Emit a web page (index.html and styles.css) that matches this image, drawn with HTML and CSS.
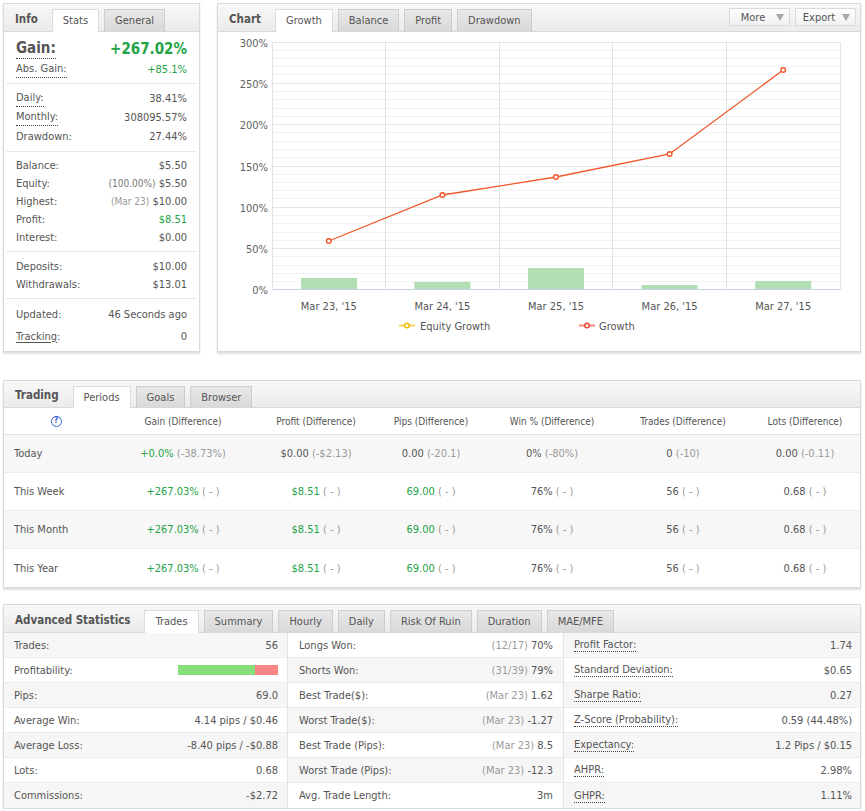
FILE: index.html
```html
<!DOCTYPE html>
<html lang="en">
<head>
<meta charset="utf-8">
<title>Account Overview</title>
<link rel="stylesheet" href="styles.css">
</head>
<body>
<div class="page">
  <div class="top">
    <section class="panel info">
      <div class="phead">
        <h2>Info</h2>
        <span class="tab on">Stats</span>
        <span class="tab">General</span>
      </div>
      <div class="sec s1">
        <div class="row big"><span class="dot">Gain:</span><span class="green">+267.02%</span></div>
        <div class="row"><span class="dot">Abs. Gain:</span><span class="green">+85.1%</span></div>
      </div>
      <div class="sec s2">
        <div class="row"><span class="dot">Daily:</span><span>38.41%</span></div>
        <div class="row"><span class="dot">Monthly:</span><span>308095.57%</span></div>
        <div class="row"><span>Drawdown:</span><span>27.44%</span></div>
      </div>
      <div class="sec s3">
        <div class="row"><span>Balance:</span><span>$5.50</span></div>
        <div class="row"><span>Equity:</span><span><small class="mid">(100.00%)</small> $5.50</span></div>
        <div class="row"><span>Highest:</span><span><small class="dim">(Mar 23)</small> $10.00</span></div>
        <div class="row"><span>Profit:</span><span class="green">$8.51</span></div>
        <div class="row"><span>Interest:</span><span>$0.00</span></div>
      </div>
      <div class="sec s4">
        <div class="row"><span>Deposits:</span><span>$10.00</span></div>
        <div class="row"><span>Withdrawals:</span><span>$13.01</span></div>
      </div>
      <div class="sec s5">
        <div class="row"><span>Updated:</span><span>46 Seconds ago</span></div>
        <div class="row track"><span><u>Tracking</u>:</span><span>0</span></div>
      </div>
    </section>

    <section class="panel chart">
      <div class="phead">
        <h2>Chart</h2>
        <span class="tab on">Growth</span>
        <span class="tab">Balance</span>
        <span class="tab">Profit</span>
        <span class="tab">Drawdown</span>
        <div class="tools">
          <span class="btn"><span>More</span><i class="caret"></i></span>
          <span class="btn"><span>Export</span><i class="caret"></i></span>
        </div>
      </div>
      <svg class="plot" width="642" height="319" viewBox="0 0 642 319">
        <g class="minor">
          <line x1="54" x2="622" y1="249.5" y2="249.5"/><line x1="54" x2="622" y1="241.5" y2="241.5"/>
          <line x1="54" x2="622" y1="233.5" y2="233.5"/><line x1="54" x2="622" y1="224.5" y2="224.5"/>
          <line x1="54" x2="622" y1="208.5" y2="208.5"/><line x1="54" x2="622" y1="200.5" y2="200.5"/>
          <line x1="54" x2="622" y1="191.5" y2="191.5"/><line x1="54" x2="622" y1="183.5" y2="183.5"/>
          <line x1="54" x2="622" y1="166.5" y2="166.5"/><line x1="54" x2="622" y1="158.5" y2="158.5"/>
          <line x1="54" x2="622" y1="150.5" y2="150.5"/><line x1="54" x2="622" y1="142.5" y2="142.5"/>
          <line x1="54" x2="622" y1="125.5" y2="125.5"/><line x1="54" x2="622" y1="117.5" y2="117.5"/>
          <line x1="54" x2="622" y1="109.5" y2="109.5"/><line x1="54" x2="622" y1="100.5" y2="100.5"/>
          <line x1="54" x2="622" y1="84.5" y2="84.5"/><line x1="54" x2="622" y1="76.5" y2="76.5"/>
          <line x1="54" x2="622" y1="67.5" y2="67.5"/><line x1="54" x2="622" y1="59.5" y2="59.5"/>
          <line x1="54" x2="622" y1="42.5" y2="42.5"/><line x1="54" x2="622" y1="34.5" y2="34.5"/>
          <line x1="54" x2="622" y1="26.5" y2="26.5"/><line x1="54" x2="622" y1="18.5" y2="18.5"/>
        </g>
        <g class="major">
          <line x1="54" x2="622" y1="10.5" y2="10.5"/>
          <line x1="54" x2="622" y1="51.5" y2="51.5"/>
          <line x1="54" x2="622" y1="92.5" y2="92.5"/>
          <line x1="54" x2="622" y1="134.5" y2="134.5"/>
          <line x1="54" x2="622" y1="175.5" y2="175.5"/>
          <line x1="54" x2="622" y1="216.5" y2="216.5"/>
          <line x1="54.5" x2="54.5" y1="10" y2="258"/>
          <line x1="167.5" x2="167.5" y1="10" y2="258"/>
          <line x1="281.5" x2="281.5" y1="10" y2="258"/>
          <line x1="394.5" x2="394.5" y1="10" y2="258"/>
          <line x1="508.5" x2="508.5" y1="10" y2="258"/>
          <line x1="622.5" x2="622.5" y1="10" y2="258"/>
        </g>
        <g class="ylab">
          <text x="50" y="15">300%</text>
          <text x="50" y="56">250%</text>
          <text x="50" y="97">200%</text>
          <text x="50" y="139">150%</text>
          <text x="50" y="180">100%</text>
          <text x="50" y="221">50%</text>
          <text x="50" y="262">0%</text>
        </g>
        <g class="bars">
          <rect x="83" y="246" width="56" height="12"/>
          <rect x="196.4" y="250" width="56" height="8"/>
          <rect x="310" y="236" width="56" height="22"/>
          <rect x="423.6" y="253" width="56" height="5"/>
          <rect x="537.2" y="249" width="56" height="9"/>
        </g>
        <line class="axis" x1="54" x2="622" y1="257.5" y2="257.5"/>
        <polyline class="growth" points="110.8,209 224.4,163 338,145 451.6,122 565.2,38"/>
        <g class="marks">
          <circle cx="110.8" cy="209" r="2.3"/>
          <circle cx="224.4" cy="163" r="2.3"/>
          <circle cx="338" cy="145" r="2.3"/>
          <circle cx="451.6" cy="122" r="2.3"/>
          <circle cx="565.2" cy="38" r="2.3"/>
        </g>
        <g class="xlab">
          <text x="110.8" y="278">Mar 23, '15</text>
          <text x="224.4" y="278">Mar 24, '15</text>
          <text x="338" y="278">Mar 25, '15</text>
          <text x="451.6" y="278">Mar 26, '15</text>
          <text x="565.2" y="278">Mar 27, '15</text>
        </g>
        <g class="legend">
          <line class="lg-eq" x1="181" x2="197" y1="293.5" y2="293.5"/>
          <circle class="lg-eq-dot" cx="189" cy="293.5" r="2.3"/>
          <text x="202" y="297.5">Equity Growth</text>
          <line class="lg-gr" x1="361" x2="377" y1="293.5" y2="293.5"/>
          <circle class="lg-gr-dot" cx="369" cy="293.5" r="2.3"/>
          <text x="381" y="297.5">Growth</text>
        </g>
      </svg>
    </section>
  </div>

  <section class="panel trading">
    <div class="phead">
      <h2>Trading</h2>
      <span class="tab on">Periods</span>
      <span class="tab">Goals</span>
      <span class="tab">Browser</span>
    </div>
    <div class="tgrid thead">
      <div class="c"><span class="help">?</span></div>
      <div class="c">Gain (Difference)</div>
      <div class="c">Profit (Difference)</div>
      <div class="c">Pips (Difference)</div>
      <div class="c">Win % (Difference)</div>
      <div class="c">Trades (Difference)</div>
      <div class="c">Lots (Difference)</div>
    </div>
    <div class="tgrid trow alt">
      <div class="name">Today</div>
      <div class="c"><span class="green">+0.0%</span> <span class="dim">(-38.73%)</span></div>
      <div class="c">$0.00 <span class="dim">(-$2.13)</span></div>
      <div class="c">0.00 <span class="dim">(-20.1)</span></div>
      <div class="c">0% <span class="dim">(-80%)</span></div>
      <div class="c">0 <span class="dim">(-10)</span></div>
      <div class="c">0.00 <span class="dim">(-0.11)</span></div>
    </div>
    <div class="tgrid trow">
      <div class="name">This Week</div>
      <div class="c"><span class="green">+267.03%</span> <span class="dim">( - )</span></div>
      <div class="c"><span class="green">$8.51</span> <span class="dim">( - )</span></div>
      <div class="c"><span class="green">69.00</span> <span class="dim">( - )</span></div>
      <div class="c">76% <span class="dim">( - )</span></div>
      <div class="c">56 <span class="dim">( - )</span></div>
      <div class="c">0.68 <span class="dim">( - )</span></div>
    </div>
    <div class="tgrid trow alt">
      <div class="name">This Month</div>
      <div class="c"><span class="green">+267.03%</span> <span class="dim">( - )</span></div>
      <div class="c"><span class="green">$8.51</span> <span class="dim">( - )</span></div>
      <div class="c"><span class="green">69.00</span> <span class="dim">( - )</span></div>
      <div class="c">76% <span class="dim">( - )</span></div>
      <div class="c">56 <span class="dim">( - )</span></div>
      <div class="c">0.68 <span class="dim">( - )</span></div>
    </div>
    <div class="tgrid trow last">
      <div class="name">This Year</div>
      <div class="c"><span class="green">+267.03%</span> <span class="dim">( - )</span></div>
      <div class="c"><span class="green">$8.51</span> <span class="dim">( - )</span></div>
      <div class="c"><span class="green">69.00</span> <span class="dim">( - )</span></div>
      <div class="c">76% <span class="dim">( - )</span></div>
      <div class="c">56 <span class="dim">( - )</span></div>
      <div class="c">0.68 <span class="dim">( - )</span></div>
    </div>
  </section>

  <section class="panel adv">
    <div class="phead">
      <h2>Advanced Statistics</h2>
      <span class="tab on">Trades</span>
      <span class="tab">Summary</span>
      <span class="tab">Hourly</span>
      <span class="tab">Daily</span>
      <span class="tab">Risk Of Ruin</span>
      <span class="tab">Duration</span>
      <span class="tab">MAE/MFE</span>
    </div>
    <div class="acols">
      <div class="acol odd">
        <div class="arow"><span>Trades:</span><span>56</span></div>
        <div class="arow"><span>Profitability:</span><span class="pbar"><i class="win"></i><i class="loss"></i></span></div>
        <div class="arow"><span>Pips:</span><span>69.0</span></div>
        <div class="arow"><span>Average Win:</span><span>4.14 pips / $0.46</span></div>
        <div class="arow"><span>Average Loss:</span><span>-8.40 pips / -$0.88</span></div>
        <div class="arow"><span>Lots:</span><span>0.68</span></div>
        <div class="arow"><span>Commissions:</span><span>-$2.72</span></div>
      </div>
      <div class="acol even">
        <div class="arow"><span>Longs Won:</span><span><span class="dim">(12/17)</span> 70%</span></div>
        <div class="arow"><span>Shorts Won:</span><span><span class="dim">(31/39)</span> 79%</span></div>
        <div class="arow"><span>Best Trade($):</span><span><span class="dim">(Mar 23)</span> 1.62</span></div>
        <div class="arow"><span>Worst Trade($):</span><span><span class="dim">(Mar 23)</span> -1.27</span></div>
        <div class="arow"><span>Best Trade (Pips):</span><span><span class="dim">(Mar 23)</span> 8.5</span></div>
        <div class="arow"><span>Worst Trade (Pips):</span><span><span class="dim">(Mar 23)</span> -12.3</span></div>
        <div class="arow"><span>Avg. Trade Length:</span><span>3m</span></div>
      </div>
      <div class="acol odd last">
        <div class="arow"><span class="dot">Profit Factor:</span><span>1.74</span></div>
        <div class="arow"><span class="dot">Standard Deviation:</span><span>$0.65</span></div>
        <div class="arow"><span class="dot">Sharpe Ratio:</span><span>0.27</span></div>
        <div class="arow"><span class="dot">Z-Score (Probability):</span><span>0.59 (44.48%)</span></div>
        <div class="arow"><span class="dot">Expectancy:</span><span>1.2 Pips / $0.15</span></div>
        <div class="arow"><span class="dot">AHPR:</span><span>2.98%</span></div>
        <div class="arow"><span class="dot">GHPR:</span><span>1.11%</span></div>
      </div>
    </div>
  </section>
</div>
</body>
</html>
```

FILE: styles.css
```css
* { box-sizing: border-box; }

body {
  margin: 0;
  background: #fff;
  font-family: "DejaVu Sans Condensed", "Liberation Sans", sans-serif;
  font-size: 11px;
  color: #555;
}

.page {
  width: 865px;
  padding: 3px 4px 0 3px;
}

.green { color: #22a346; }
.dim { color: #9a9a9a; }
.mid { color: #777; }
small { font-size: 10px; }

/* panels */
.panel {
  background: #fff;
  border: 1px solid #dadada;
  box-shadow: 0 2px 2px rgba(0, 0, 0, 0.13);
}

.phead {
  height: 28px;
  display: flex;
  align-items: flex-end;
  padding-left: 11px;
  background: linear-gradient(#f8f8f8, #ebebeb);
  border-bottom: 1px solid #d9d9d9;
}

.trading .phead { height: 27px; }

.phead h2 {
  margin: 0 14px 0 0;
  align-self: center;
  padding-top: 2px;
  font-size: 11.5px;
  font-weight: bold;
  color: #555;
}

.tab {
  height: 23px;
  margin: 0 5px -1px 0;
  padding: 0 10px;
  border: 1px solid #cdcdcd;
  border-bottom: none;
  background: linear-gradient(#e8e8e8, #d8d8d8);
  line-height: 22px;
  color: #555;
  white-space: nowrap;
}

.trading .tab { height: 22px; line-height: 21px; }

.tab.on {
  background: #fff;
  border-color: #dcdcdc;
}

/* top row */
.top {
  display: flex;
  gap: 17px;
  align-items: stretch;
}

.info {
  width: 197px;
  flex: none;
}

.sec {
  margin: 0 2px;
  padding: 5px 10px 5px;
  border-bottom: 1px solid #e7e7e7;
}

.row {
  display: flex;
  justify-content: space-between;
  align-items: center;
  height: 18px;
  white-space: nowrap;
}

.dot {
  border-bottom: 1px dotted #444;
  padding-bottom: 2px;
}

.s1 { padding: 6px 10px 4px; }
.s1 .row { height: 19px; }
.s1 .row.big { height: 22px; font-size: 15px; font-weight: bold; }
.s1 .row.big .dot { padding-bottom: 1px; }
.s2 .row { height: 19px; }
.s3 { padding: 4px 10px 5px; }
.s5 { padding: 6px 10px 6px; border-bottom: none; }
.s5 .track { margin-top: 4px; }
.s5 u { text-underline-offset: 2px; }

/* chart */
.chart {
  flex: 1;
  min-width: 0;
}

.tools {
  margin-left: auto;
  align-self: flex-start;
  margin-top: 4px;
  margin-right: 4px;
  display: flex;
  gap: 5px;
}

.btn {
  width: 61px;
  height: 18px;
  display: flex;
  align-items: center;
  padding-right: 5px;
  border: 1px solid #dadada;
  background: linear-gradient(#fdfdfd, #f1f1f1);
  color: #555;
}

.btn span {
  flex: 1;
  text-align: center;
}

.caret {
  width: 0;
  height: 0;
  border-left: 4px solid transparent;
  border-right: 4px solid transparent;
  border-top: 7px solid #a8a8a8;
}

.plot {
  display: block;
  font-family: "DejaVu Sans Condensed", "Liberation Sans", sans-serif;
  font-size: 11px;
}

.plot .minor line { stroke: #f3f3f3; stroke-width: 1; }
.plot .major line { stroke: #e4e4e4; stroke-width: 1; }
.plot .axis { stroke: #c3d0e2; stroke-width: 1; }
.plot .ylab text { text-anchor: end; fill: #5f5f5f; }
.plot .xlab text { text-anchor: middle; fill: #555; }
.plot .bars rect { fill: #b2deb3; }
.plot .growth { fill: none; stroke: #f0582a; stroke-width: 1.3; }
.plot .marks circle { fill: #fff; stroke: #f0582a; stroke-width: 1.4; }
.plot .legend text { fill: #555; font-size: 11px; }
.plot .lg-eq { stroke: #fbd45e; stroke-width: 2; }
.plot .lg-eq-dot { fill: #fff; stroke: #f4b800; stroke-width: 1.4; }
.plot .lg-gr { stroke: #f5897e; stroke-width: 2; }
.plot .lg-gr-dot { fill: #fff; stroke: #ea4a30; stroke-width: 1.4; }

/* trading periods */
.trading { margin-top: 28px; }

.tgrid {
  display: grid;
  grid-template-columns: 104px 150px 116px 114px 128px 134px 1fr;
  align-items: center;
}

.tgrid .c { text-align: center; white-space: nowrap; }

.thead {
  height: 27px;
  border-bottom: 1px solid #e3e3e3;
  font-size: 10px;
}

.help {
  display: inline-block;
  width: 11px;
  height: 11px;
  border: 1.5px solid #3b63d6;
  border-radius: 50%;
  color: #3b63d6;
  font-size: 8px;
  font-weight: bold;
  line-height: 8px;
  text-align: center;
  vertical-align: middle;
}

.trow {
  height: 38px;
  border-bottom: 1px solid #ededed;
  font-size: 11px;
}

.trow.alt { background: #f7f7f7; }
.trow.last { border-bottom: none; }
.trow .name { padding-left: 10px; }

/* advanced statistics */
.adv { margin-top: 16px; }

.acols {
  display: grid;
  grid-template-columns: 284px 276px 1fr;
}

.acol { border-right: 1px solid #e3e3e3; }
.acol.last { border-right: none; }

.arow {
  height: 25px;
  display: flex;
  justify-content: space-between;
  align-items: center;
  padding: 0 9px 0 10px;
  border-bottom: 1px solid #ececec;
  white-space: nowrap;
}

.acol .arow:last-child { border-bottom: none; }
.acol.even .arow { padding: 0 10px 0 11px; }
.acol.last .arow { padding: 0 8px 0 10px; }

.acol.odd .arow:nth-child(odd),
.acol.even .arow:nth-child(even) { background: #f6f6f6; }

.acol .dot { padding-bottom: 0; }

.pbar {
  display: flex;
  width: 100px;
  height: 10px;
}

.pbar .win { width: 77px; background: #86df7a; }
.pbar .loss { flex: 1; background: #f98584; }
```
